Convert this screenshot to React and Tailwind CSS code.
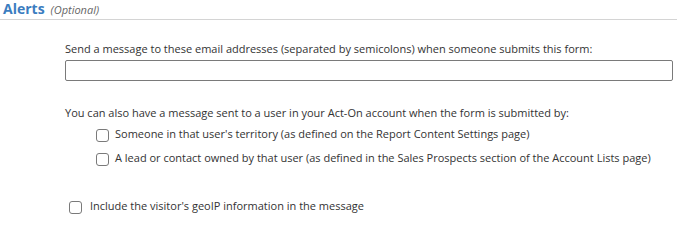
export default function App() {
  return (
    <div className="w-[677px] h-[219px] bg-white font-['Open_Sans',sans-serif] text-[#333]">
      <div className="flex items-baseline gap-[6px] h-[20px] pl-[3px] border-b border-[#d4d4d4] leading-[17px]">
        <span className="text-[14px] font-bold text-[#3b7dc0]">Alerts</span>
        <span className="text-[11px] italic text-[#666]">(Optional)</span>
      </div>

      <div className="pl-[65px] pr-[4px] pt-[21px] text-[11px] leading-[15px]">
        <p>
          Send a message to these email addresses (separated by semicolons) when someone submits this form:
        </p>
        <input
          type="text"
          className="block w-[608px] h-[21px] mt-[4px] border border-[#7a7a7a] rounded-[2px] bg-white outline-none"
        />

        <p className="mt-[24px]">
          You can also have a message sent to a user in your Act-On account when the form is submitted by:
        </p>
        <div className="flex flex-col gap-[8px] mt-[6px] pl-[31px]">
          <label className="flex items-start gap-[6px]">
            <span className="shrink-0 w-[13px] h-[13px] mt-[3px] border border-[#7a7a7a] rounded-[3px] bg-white" />
            Someone in that user's territory (as defined on the Report Content Settings page)
          </label>
          <label className="flex items-start gap-[6px]">
            <span className="shrink-0 w-[13px] h-[13px] mt-[3px] border border-[#7a7a7a] rounded-[3px] bg-white" />
            A lead or contact owned by that user (as defined in the Sales Prospects section of the Account Lists page)
          </label>
        </div>
      </div>

      <label className="flex items-start gap-[8px] mt-[32px] pl-[69px] text-[11px] leading-[15px] text-[#333]">
        <span className="shrink-0 w-[13px] h-[13px] mt-[3px] border border-[#7a7a7a] rounded-[3px] bg-white" />
        Include the visitor's geoIP information in the message
      </label>
    </div>
  );
}
